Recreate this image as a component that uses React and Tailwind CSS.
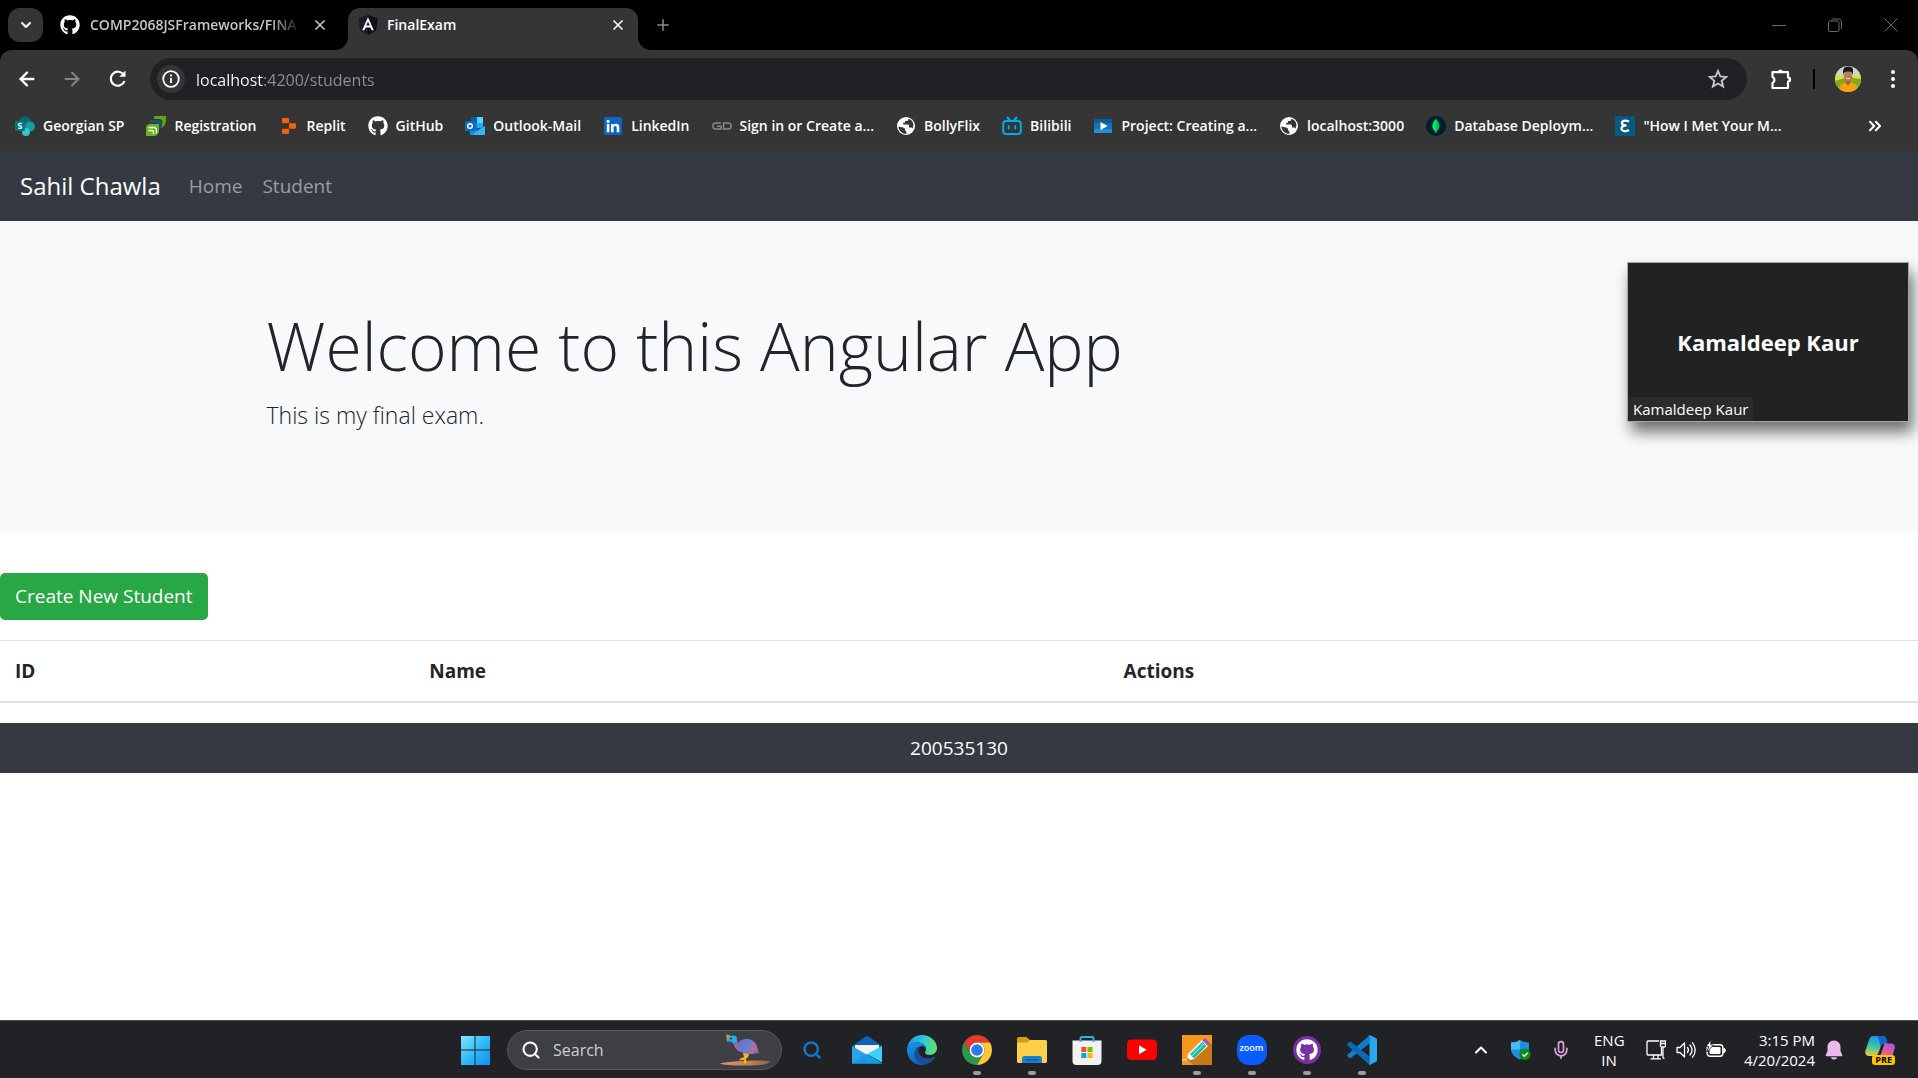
import React from "react";
import { FaGithub } from "react-icons/fa";
import {
  ArrowLeft,
  ArrowRight,
  ChevronDown,
  ChevronUp,
  ChevronsRight,
  Mic,
  Plus,
  Search,
  X,
} from "lucide-react";

/* ---------- small logos ---------- */

const SharePointIcon = () => (
  <svg viewBox="0 0 20 20" className="size-5">
    <circle cx="10" cy="6" r="5.8" fill="#036c70" />
    <circle cx="15" cy="10.5" r="5" fill="#1a9ba1" />
    <circle cx="11" cy="16" r="4" fill="#37c6d0" />
    <rect x="0" y="5" width="10" height="10" rx="1" fill="#03787c" />
    <path d="M7 7.8C5.600 7 3.400 7.200 3.500 8.700c.1 1.300 3.300 1 3.300 2.500 0 1.400-2.200 1.500-3.500.7" fill="none" stroke="#fff" strokeWidth="1.300" />
  </svg>
);

const RegistrationIcon = () => (
  <svg viewBox="0 0 20 20" className="size-5">
    <path d="M8 0h12v3c0 5-2 8-5 9 2-5 2-8-1-9H8z" fill="#5ea510" />
    <path d="M4 4h8c3 0 4 2 3 6-.5 2-1 3-2 4 0-5-1-7-4-7H4z" fill="#1c4f82" />
    <path d="M0 12c0-2.500 2-4 4.500-4H13v6c0 4-3 6-6 6H0z" fill="#6cb41c" />
    <path d="M2.500 11.500h5.500c2 0 2.500 1.500 2.500 3v3M2.500 14.500h3.200c1.300 0 1.800.8 1.800 1.800V18" fill="none" stroke="#fff" strokeWidth="1.300" />
  </svg>
);

const ReplitIcon = () => (
  <svg viewBox="0 0 20 20" className="size-5">
    <path d="M3 3.200C3 2.500 3.500 2 4.200 2H9c.6 0 1 .5 1 1.200V7.300H4.200C3.500 7.300 3 6.800 3 6.200zM10 7.300h5.800c.7 0 1.200.5 1.200 1.200v3c0 .7-.5 1.200-1.200 1.200H10zM3 13.900c0-.7.5-1.200 1.200-1.200H10v4.100c0 .7-.4 1.200-1 1.200H4.200c-.7 0-1.200-.5-1.200-1.200z" fill="#f26207" />
  </svg>
);

const OutlookIcon = () => (
  <svg viewBox="0 0 20 20" className="size-5">
    <rect x="6" y="1" width="12" height="12" rx="1" fill="#0a5fb4" />
    <path d="M12 1h6v6h-6z" fill="#50d9ff" />
    <path d="M6 7h6v5H6z" fill="#0f78d4" />
    <path d="M12 7h6v5h-6z" fill="#28a8ea" />
    <path d="M5 10l7.500 4L20 10v8a1 1 0 0 1-1 1H6a1 1 0 0 1-1-1z" fill="#1490df" />
    <path d="M20 10v8a1 1 0 0 1-1 1H7z" fill="#35b8f1" />
    <rect x="0" y="5" width="10" height="10" rx="1" fill="#0f6cbd" />
    <circle cx="5" cy="10" r="2.300" fill="none" stroke="#fff" strokeWidth="1.400" />
  </svg>
);

const LinkedInIcon = () => (
  <svg viewBox="0 0 20 20" className="size-5">
    <rect x="1" y="1" width="18" height="18" rx="1.500" fill="#0a66c2" />
    <circle cx="5.100" cy="5.300" r="1.600" fill="#fff" />
    <path d="M3.800 8h2.600v8.300H3.800zM8 8h2.500v1.200c.5-.9 1.500-1.400 2.700-1.400 2.500 0 3.100 1.600 3.100 3.900v4.600h-2.600v-4.200c0-1.100-.2-2-1.400-2s-1.700.8-1.700 2v4.200H8z" fill="#fff" />
  </svg>
);

const GdIcon = () => (
  <svg viewBox="0 0 20 20" className="size-5" fill="none" stroke="#85888c" strokeWidth="1.500">
    <path d="M9 7H3.500A2.300 2.300 0 0 0 1 9.300v1.400A2.300 2.300 0 0 0 3.500 13H9v-2.800H5M11.500 7h5A2.300 2.300 0 0 1 19 9.300v1.400a2.300 2.300 0 0 1-2.500 2.300h-5z" />
  </svg>
);

const GlobeIcon = () => (
  <svg viewBox="0 0 20 20" className="size-5">
    <circle cx="10" cy="10" r="9" fill="#fff" />
    <path d="M2.500 10.500 7 11.500c1.500.3 2 1 2 2v1c1.500 0 1.500 1.500 1.500 3.300C6 18 2.500 14.500 2.500 10.500zM12.500 2.800c0 1.700-.6 2.200-2 2.200H9v1.800H7.200v1.700h4.600c1 0 1.200.8 1.200 1.700v1.300h1.700c.8 0 1.400.5 1.600 1.200C18.500 9 17.500 4.500 12.500 2.800z" fill="#35363a" />
  </svg>
);

const BilibiliIcon = () => (
  <svg viewBox="0 0 20 20" className="size-5" fill="none" stroke="#00aeec" strokeWidth="2" strokeLinecap="round">
    <rect x="1.200" y="5" width="17.600" height="13" rx="3" />
    <path d="M5.500 1.500 8 4.500M14.500 1.500 12 4.500M6.700 10v2.500M13.300 10v2.500" />
  </svg>
);

const VideoIcon = () => (
  <svg viewBox="0 0 20 20" className="size-5">
    <rect x="1" y="3" width="18" height="14" fill="#1273b5" />
    <path d="M1 3h18v4H1z" fill="#0d5c96" />
    <path d="M1 13h18v4H1z" fill="#2190d4" />
    <path d="M7.500 6v8l7-4z" fill="#fff" />
  </svg>
);

const MongoIcon = () => (
  <svg viewBox="0 0 20 20" className="size-5">
    <circle cx="10" cy="10" r="10" fill="#001e2b" />
    <path d="M10 3c2.500 2.500 3.500 4.500 3.500 7s-1.300 4-3 5.300V17h-1v-1.700c-1.700-1.300-3-2.800-3-5.300S7.500 5.500 10 3z" fill="#00c658" />
    <path d="M10 3v14h-.5v-1.700c-1.700-1.300-3-2.800-3-5.300S7.500 5.500 10 3z" fill="#00ed64" />
  </svg>
);

const EpsilonIcon = () => (
  <svg viewBox="0 0 20 20" className="size-5">
    <path d="M0 0h20v20H0z" fill="#065a7f" />
    <path d="M14 5.500C10 3.800 6.500 5 7 7.500c.3 1.500 2 2 4.500 2-3.500 0-5.500 1.500-5 3.500.6 2.600 4.500 2.800 7.500 1" fill="none" stroke="#fff" strokeWidth="2.200" />
  </svg>
);

const AngularIcon = () => (
  <svg viewBox="0 0 20 20" className="size-5">
    <path d="M10 0 19.500 3.300 18 15.500 10 20 2 15.500.5 3.300z" fill="#1b1c2c" />
    <path d="M10 0v20l8-4.500L19.500 3.300z" fill="#0e0f18" />
    <path d="M10 2.300 4.200 15.300h2.200l1.200-2.900h4.800l1.200 2.900h2.200zm0 4.100 1.700 4.200H8.300z" fill="#fff" />
  </svg>
);

const ReloadIcon = () => (
  <svg viewBox="0 0 24 24" className="size-6" fill="none" stroke="#fff" strokeWidth="2.200">
    <path d="M17.800 8A7 7 0 1 0 18.500 14" />
    <path d="M19.500 3.500v6.200h-6.200z" fill="#fff" stroke="none" />
  </svg>
);

const InfoIcon = () => (
  <svg viewBox="0 0 20 20" className="size-5" fill="none" stroke="#fff" strokeWidth="1.800">
    <circle cx="10" cy="10" r="7.800" />
    <path d="M10 9v5M10 5.500v1.900" />
  </svg>
);

const StarIcon = () => (
  <svg viewBox="0 0 22 22" className="size-[22px]" fill="none" stroke="#c7c7c7" strokeWidth="1.900" strokeLinejoin="miter">
    <path d="M11 3l2.300 5.400 5.900.5-4.500 3.900 1.400 5.700L11 15.500l-5.100 3 1.400-5.700-4.500-3.900 5.900-.5z" />
  </svg>
);

const PuzzleIcon = () => (
  <svg viewBox="0 0 24 24" className="size-6" fill="none" stroke="#fff" strokeWidth="2.200" strokeLinejoin="round">
    <path d="M3.500 5.200H19v5.300a2 2 0 0 1 0 4.200V21H3.500v-5a3.300 3.300 0 0 0 0-6z" />
    <path d="M9 5a2.500 2.500 0 0 1 5 0zM19.500 10a2.600 2.600 0 0 1 0 5.200z" fill="#fff" stroke="none" />
  </svg>
);

const AvatarIcon = () => (
  <svg viewBox="0 0 26 26" className="size-[26px] rounded-full">
    <path d="M0 0h26v26H0z" fill="#c9d8cf" />
    <path d="M0 10h26v16H0z" fill="#86a81b" />
    <path d="M0 10l7-1 3 3-10 3zM17 10l9-1v4l-8-1z" fill="#d8e03a" />
    <path d="M4 26c0-6 2-8.500 6-9.500h6c5 1 7 3.500 7 9.500z" fill="#f5a30c" />
    <path d="M10.500 13h5v4l-2.500 2.500-2.500-2.500z" fill="#a9603f" />
    <ellipse cx="13" cy="9.500" rx="4" ry="5.800" fill="#bf7c58" />
    <path d="M8.500 9C7.300 3.500 8.500.5 13.500.5S18.700 4 17.500 9c-.4-2.500-1.200-3.500-4.500-3.500S9 6.500 8.500 9z" fill="#1d1a26" />
    <path d="M11 12c1 1.300 3 1.300 4 0z" fill="#fff" />
  </svg>
);

/* ---------- taskbar logos ---------- */

const WindowsIcon = () => (
  <svg viewBox="0 0 30 30" className="size-[30px]">
    <defs>
      <linearGradient id="win" x1="0" y1="0" x2="30" y2="30" gradientUnits="userSpaceOnUse">
        <stop offset="0" stopColor="#8fe4ff" />
        <stop offset=".5" stopColor="#33bdf8" />
        <stop offset="1" stopColor="#0a8ef5" />
      </linearGradient>
    </defs>
    <path d="M1 1h13.500v13.500H1zM15.500 1H30v13.500H15.500zM1 15.500h13.500V30H1zM15.500 15.500H30V30H15.500z" fill="url(#win)" />
  </svg>
);

const BirdIcon = () => (
  <svg viewBox="0 0 52 34" className="h-[34px] w-[52px]">
    <defs>
      <linearGradient id="bird" x1="16" y1="8" x2="42" y2="22" gradientUnits="userSpaceOnUse">
        <stop offset="0" stopColor="#8a5fb8" />
        <stop offset=".4" stopColor="#5d7fd6" />
        <stop offset=".7" stopColor="#b0719b" />
        <stop offset="1" stopColor="#5a55c5" />
      </linearGradient>
      <linearGradient id="sand" x1="0" x2="1">
        <stop offset="0" stopColor="#e2906b" />
        <stop offset=".6" stopColor="#c08350" />
        <stop offset="1" stopColor="#8a5f48" />
      </linearGradient>
    </defs>
    <path d="M1 30.500c4-1.500 20-2.500 27-2.800s20 0 23 .5c1 1-3 2.800-8 3.500-8 1-38 1.500-42-1.200z" fill="url(#sand)" />
    <path d="M24 20h6l-.5 3.500-2.500 2.500.3 4.500h-2.200l-.3-3.500-4.300.3v-1.300l4.500-2z" fill="#f2b61d" />
    <path d="M13 7h5c1 4 2 6 5 8l-2 4c-4-2-6-6-8-12z" fill="#d0569f" />
    <path d="M14.500 6h3c.5 3 1 6 3.500 8l-1.500 1.500c-3-2-4-5-5-9.500z" fill="#3d8bd4" />
    <path d="M17.500 13c1-3.500 4-6.500 8.500-7 5-.5 9 1.500 11 5 1.800 3 1.500 6 3.500 9.500-3-.8-7 .8-11 .5-6-.3-10-3-12-8z" fill="url(#bird)" />
    <path d="M7 1.500l4 .5.500 3-3.500 4z" fill="#c28a55" />
    <path d="M9 6c1-4 8-5 9-1 0 3-2 5-5 5l-4-1z" fill="#27b2dc" />
    <path d="M9 8l-1 2 4 1 2-2z" fill="#235596" />
    <circle cx="12" cy="5.500" r="1" fill="#102a44" />
  </svg>
);

const MailIcon = () => (
  <svg viewBox="0 0 30 30" className="size-[30px]">
    <path d="M0 11 13.500 1.600a2.500 2.500 0 0 1 3 0L30 11v3H0z" fill="#0b62b8" />
    <path d="M3 10h24v10H3z" fill="#f3f3f3" />
    <path d="M0 11l30 17.500H0z" fill="#2aa3ea" />
    <path d="M30 11v16.500L15 19z" fill="#3fd0f8" />
    <path d="M0 28.500h30L15 19z" fill="#159ae6" />
  </svg>
);

const EdgeIcon = () => (
  <svg viewBox="0 0 30 30" className="size-[30px]">
    <defs>
      <linearGradient id="edgeTop" x1="2" y1="6" x2="30" y2="12" gradientUnits="userSpaceOnUse">
        <stop offset="0" stopColor="#1b9de2" />
        <stop offset=".5" stopColor="#34c6d8" />
        <stop offset="1" stopColor="#65e263" />
      </linearGradient>
      <linearGradient id="edgeLow" x1="4" y1="10" x2="14" y2="30" gradientUnits="userSpaceOnUse">
        <stop offset="0" stopColor="#1590df" />
        <stop offset="1" stopColor="#0b62c0" />
      </linearGradient>
    </defs>
    <path d="M0 14.500C.5 6 7 0 15 0s15 6 15 13c0 4-3 7-7 7-3 0-5-1-5-2.500 0-1 1-1 1-3.500C19 10 15 7.500 10 7.500 5 7.500 1 10 0 14.500z" fill="url(#edgeTop)" />
    <path d="M0 14.500C1 10 5 7.500 10 7.500c5 0 9 2.500 9 6.500 0-1.500-2-3-4-3-3 0-6 3-6 7 0 6 5 9 8 11.800C8 31 0 25 0 14.500z" fill="url(#edgeLow)" />
    <path d="M12 11.500C7 14 6 20 9 24.500c2 3.500 5 5 8 5.300 5-.8 9-3.800 11-7.300.5-.8-.2-1-1-.6-6 3-15 1-15.500-5.400-.1-2 .5-3.500 1.500-4.500z" fill="#184f94" />
  </svg>
);

const ChromeIcon = () => (
  <svg viewBox="2 2 44 44" className="size-[30px]">
    <path d="M4.950 13A22 22 0 0 1 43.050 13H24A11 11 0 0 0 14.470 29.500Z" fill="#e33b2e" />
    <path d="M4.950 13A22 22 0 0 0 24 46L33.530 29.500A11 11 0 0 1 14.470 29.500Z" fill="#269c4b" />
    <path d="M43.050 13A22 22 0 0 1 24 46L33.530 29.500A11 11 0 0 0 24 13Z" fill="#fcc934" />
    <circle cx="24" cy="24" r="11" fill="#fff" />
    <circle cx="24" cy="24" r="8.500" fill="#2f78ee" />
  </svg>
);

const ExplorerIcon = () => (
  <svg viewBox="0 0 30 30" className="size-[30px]">
    <path d="M0 4a2 2 0 0 1 2-2h7.500L13 5v5H0z" fill="#dd9c0b" />
    <path d="M0 7.500h10.500L13 5h15.500A1.500 1.500 0 0 1 30 6.500v20a1.500 1.500 0 0 1-1.500 1.500h-27A1.500 1.500 0 0 1 0 26.500z" fill="#fdd04c" />
    <path d="M5 28v-4.500A2.500 2.500 0 0 1 7.500 21h15a2.500 2.500 0 0 1 2.500 2.500V28z" fill="#1a80d2" />
    <path d="M8.500 24.800h13" stroke="#0c5697" strokeWidth="1.200" strokeLinecap="round" />
  </svg>
);

const StoreIcon = () => (
  <svg viewBox="0 0 30 30" className="size-[30px]">
    <path d="M.5 5.500h29V26a4 4 0 0 1-4 4h-21a4 4 0 0 1-4-4z" fill="#f1f1f1" />
    <path d="M8.500 7V3.300A1.300 1.300 0 0 1 9.800 2h10.400a1.300 1.300 0 0 1 1.300 1.300V7" fill="none" stroke="#29b2ec" strokeWidth="2" />
    <path d="M9.300 12h5v5h-5z" fill="#f25022" />
    <path d="M15.500 12h5v5h-5z" fill="#7fba00" />
    <path d="M9.300 18h5v5h-5z" fill="#00a4ef" />
    <path d="M15.500 18h5v5h-5z" fill="#ffb900" />
  </svg>
);

const YouTubeIcon = () => (
  <svg viewBox="0 0 30 30" className="size-[30px]">
    <rect x="0" y="4.500" width="30" height="20.500" rx="4.500" fill="#f00" />
    <path d="M12 10.300v9l7.700-4.500z" fill="#fff" />
  </svg>
);

const PencilIcon = () => (
  <svg viewBox="0 0 30 30" className="size-[30px]">
    <path d="M0 0h30v30H0z" fill="#f7981d" />
    <path d="M27 7l3 3v20H11l-5-5z" fill="#c77a12" />
    <path d="M6 19 20 5l6 6L12 24l-7 2z" fill="#fff" />
    <path d="M7.500 19.500 20.500 6.500l2 2L10 21z" fill="#2cc6d6" />
    <path d="M10 21.500 22.500 9l2 2L12 23.500z" fill="#35b77a" />
    <path d="M20.500 5.500 23 3l5 5-2.500 2.500z" fill="#a453b8" />
    <path d="M5 26l.8-3 2 2z" fill="#333" />
    <path d="M0 24.800h6.500" stroke="#ffe3b8" strokeWidth="1" />
  </svg>
);

const ZoomIcon = () => (
  <span className="flex size-[30px] items-center justify-center rounded-[12px] bg-[#0b5cff] pb-1 text-[9px] leading-3 font-semibold text-white">
    zoom
  </span>
);

const GitHubDesktopIcon = () => (
  <span className="flex size-7 items-center justify-center rounded-full bg-[#7a2fa3] text-white">
    <FaGithub className="size-[22px]" />
  </span>
);

const VsCodeIcon = () => (
  <svg viewBox="0 0 100 100" className="size-[30px]">
    <path d="M75 1v27L13 77q-3 2-5 0l-6-6q-3-3 0-6z" fill="#0f7fcd" />
    <path d="M75 99V72L13 23q-3-2-5 0l-6 6q-3 3 0 6z" fill="#0a6ab5" />
    <path d="M72 2q2-2 5-1l20 10q3 1.500 3 5v68q0 3.500-3 5L77 99q-3 1-5-1l3-4V6z" fill="#29a8f0" />
  </svg>
);

const ShieldIcon = () => (
  <svg viewBox="0 0 20 20" className="size-5">
    <path d="M9 0c2.500 1.700 5.500 2.500 9 2.500V9c0 5-4 8.500-9 10.500C4 17.500 0 14 0 9V2.500C3.500 2.500 6.500 1.700 9 0z" fill="#1b8fe0" />
    <path d="M9 0v9.500H0v-7C3.500 2.500 6.500 1.700 9 0z" fill="#45b9f5" />
    <path d="M9 9.500h9c-.2 5-4 8.200-9 10z" fill="#0f6cc0" />
    <circle cx="14" cy="14.300" r="5.600" fill="#0f8a16" />
    <path d="M11.500 14.500l1.900 1.800 3.300-3.500" stroke="#fff" strokeWidth="1.400" fill="none" />
  </svg>
);

const NetworkIcon = () => (
  <svg viewBox="0 0 20 20" className="size-5" fill="none" stroke="#fff" strokeWidth="1.300">
    <path d="M13 1H2a1 1 0 0 0-1 1v12a1 1 0 0 0 1 1h13.500V8M4.500 18.800H15M7.500 15v3.800M12 15v3.800" />
    <path d="M14.500 1h5v5a1 1 0 0 1-1 1h-3a1 1 0 0 1-1-1zM14.500 3.500h5M17 7v10c0 1 .5 1.500 1.500 1.500" />
  </svg>
);

const VolumeIcon = () => (
  <svg viewBox="0 0 20 20" className="size-5" fill="none" stroke="#fff" strokeWidth="1.300" strokeLinejoin="round" strokeLinecap="round">
    <path d="M1 7.500h3L8.500 3v14L4 12.500H1zM11.500 7.500c1.200 1.500 1.200 3.500 0 5M14 5c2.500 3 2.500 7 0 10M16.500 2.800c3.600 4.200 3.600 10.200 0 14.400" />
  </svg>
);

const BatteryIcon = () => (
  <svg viewBox="0 0 20 20" className="size-5">
    <rect x="1.200" y="4.700" width="15.600" height="11.600" rx="2.800" fill="none" stroke="#fff" strokeWidth="1.400" />
    <rect x="3.500" y="7" width="11" height="7" rx="1.200" fill="#fff" />
    <path d="M17.800 8.300c2 .2 2 4.200 0 4.400z" fill="#fff" stroke="#fff" />
    <path d="M5 0 0 6.500h2.600L1 12l6.500-7H4.700z" fill="#fff" stroke="#202124" strokeWidth=".8" />
  </svg>
);

const BellIcon = () => (
  <svg viewBox="0 0 18 20" className="h-5 w-[18px]" fill="#ecb9ef">
    <path d="M9 .5c4 0 6.500 3 6.500 6.500v4l1.800 4c.3.700 0 1.200-.8 1.200h-15c-.8 0-1.100-.5-.8-1.200l1.800-4V7C2.500 3.500 5 .5 9 .5zM6 17.200h6c-.3 1.500-1.500 2.300-3 2.300s-2.700-.8-3-2.300z" />
  </svg>
);

const CopilotIcon = () => (
  <span className="relative block h-[30px] w-[30px]">
    <svg viewBox="0 0 30 30" className="size-[30px]">
      <defs>
        <linearGradient id="cpA" x1="6" y1="0" x2="4" y2="22" gradientUnits="userSpaceOnUse">
          <stop offset="0" stopColor="#2487f2" />
          <stop offset=".45" stopColor="#31c3b0" />
          <stop offset="1" stopColor="#f5cf2b" />
        </linearGradient>
        <linearGradient id="cpB" x1="28" y1="8" x2="18" y2="26" gradientUnits="userSpaceOnUse">
          <stop offset="0" stopColor="#a457ea" />
          <stop offset=".6" stopColor="#f0588f" />
          <stop offset="1" stopColor="#fb9154" />
        </linearGradient>
      </defs>
      <path d="M8 1h10c2.500 0 3 2 3.700 5l.6 2.500H19c-2.500 0-3 1.500-4 5l-1.500 4c-.8 2-2 3.500-4 3.500H4c-3 0-4.500-2-3.500-5.500L4 5c.8-2.500 2-4 4-4z" fill="url(#cpA)" />
      <path d="M13 1h5c2.500 0 3 2 3.700 5l.6 2.500H19c-2 0-3 1-3.500 3z" fill="#1562d8" />
      <path d="M19.500 8.500H26c3 0 4.500 2 3.600 5.500L26 25c-.8 2.500-2 4-4 4H12l3-7z" fill="url(#cpB)" />
    </svg>
    <span className="absolute right-0 bottom-0 rounded-[3px] bg-[#fdc500] px-[3px] text-[9px] leading-[10px] font-bold text-black">PRE</span>
  </span>
);

/* ---------- page data ---------- */

const bookmarks = [
  { label: "Georgian SP", Icon: SharePointIcon },
  { label: "Registration", Icon: RegistrationIcon },
  { label: "Replit", Icon: ReplitIcon },
  { label: "GitHub", Icon: () => <FaGithub className="size-5 text-white" /> },
  { label: "Outlook-Mail", Icon: OutlookIcon },
  { label: "LinkedIn", Icon: LinkedInIcon },
  { label: "Sign in or Create a...", Icon: GdIcon },
  { label: "BollyFlix", Icon: GlobeIcon },
  { label: "Bilibili", Icon: BilibiliIcon },
  { label: "Project: Creating a...", Icon: VideoIcon },
  { label: "localhost:3000", Icon: GlobeIcon },
  { label: "Database Deploym...", Icon: MongoIcon },
  { label: '"How I Met Your M...', Icon: EpsilonIcon },
];

const apps = [
  { label: "Find", Icon: () => <Search className="size-5 text-[#1673c6]" strokeWidth={3} /> },
  { label: "Mail", Icon: MailIcon },
  { label: "Edge", Icon: EdgeIcon },
  { label: "Chrome", Icon: ChromeIcon, running: true },
  { label: "File Explorer", Icon: ExplorerIcon, running: true },
  { label: "Store", Icon: StoreIcon },
  { label: "YouTube", Icon: YouTubeIcon },
  { label: "Editor", Icon: PencilIcon, running: true },
  { label: "Zoom", Icon: ZoomIcon, running: true },
  { label: "GitHub Desktop", Icon: GitHubDesktopIcon, running: true },
  { label: "VS Code", Icon: VsCodeIcon, running: true },
];

/* ---------- browser chrome ---------- */

function TabStrip() {
  return (
    <div className="flex h-[50px] items-end bg-black pl-2 text-sm font-semibold">
      <button aria-label="Search tabs" className="mb-2 flex h-[34px] w-[35px] items-center justify-center rounded-xl bg-[#353535] text-white">
        <ChevronDown className="size-4" strokeWidth={3} />
      </button>
      <div className="flex h-[42px] w-[292px] items-center pb-2 pl-[17px] text-[#c7c7c7]">
        <FaGithub className="size-5 shrink-0 text-white" />
        <span className="ml-[10px] w-[212px] whitespace-nowrap [mask-image:linear-gradient(to_right,black_85%,transparent)]">
          COMP2068JSFrameworks/FINA
        </span>
        <button aria-label="Close tab" className="ml-[10px]">
          <X className="size-4" strokeWidth={2.5} />
        </button>
      </div>
      <svg viewBox="0 0 13 13" className="size-[13px]">
        <path d="M13 0v13H0A13 13 0 0 0 13 0z" fill="#353535" />
      </svg>
      <div className="flex h-[42px] w-[290px] items-center rounded-t-xl bg-[#353535] pr-3 pb-2 pl-[10px] text-white">
        <AngularIcon />
        <span className="ml-[9px] flex-1">FinalExam</span>
        <button aria-label="Close tab">
          <X className="size-4" strokeWidth={2.5} />
        </button>
      </div>
      <svg viewBox="0 0 13 13" className="size-[13px]">
        <path d="M0 0v13h13A13 13 0 0 1 0 0z" fill="#353535" />
      </svg>
      <button aria-label="New tab" className="mb-4 ml-[3px] text-[#8c8c8c]">
        <Plus className="size-[18px]" strokeWidth={2} />
      </button>
      <div className="mb-[18px] ml-auto flex items-center gap-[42px] pr-5 text-[#6a6a6a]">
        <button aria-label="Minimize">
          <svg viewBox="0 0 14 14" className="size-[14px]" stroke="currentColor">
            <path d="M0 7.500h14" />
          </svg>
        </button>
        <button aria-label="Restore">
          <svg viewBox="0 0 14 14" className="size-[14px]" fill="none" stroke="currentColor">
            <rect x=".5" y="3" width="10.500" height="10.500" rx="1.500" />
            <path d="M3.500 1h7a3 3 0 0 1 3 3v7" />
          </svg>
        </button>
        <button aria-label="Close">
          <svg viewBox="0 0 14 14" className="size-[14px]" stroke="currentColor">
            <path d="M.5.5l13 13M13.500.5l-13 13" />
          </svg>
        </button>
      </div>
    </div>
  );
}

function Toolbar() {
  return (
    <div className="flex h-[58px] items-center rounded-t-xl bg-[#353535] pr-[15px] pl-4 text-white">
      <button aria-label="Back" className="w-6">
        <ArrowLeft className="size-[22px]" strokeWidth={2.5} />
      </button>
      <button aria-label="Forward" className="ml-[21px] w-6 text-[#848484]">
        <ArrowRight className="size-[22px]" strokeWidth={2.2} />
      </button>
      <button aria-label="Reload" className="ml-[21px]">
        <ReloadIcon />
      </button>
      <div className="ml-5 flex h-[42px] flex-1 items-center rounded-full bg-[#202124] pr-[18px] pl-[7px]">
        <button aria-label="Site information" className="flex size-7 items-center justify-center rounded-full bg-[#353535]">
          <InfoIcon />
        </button>
        {/* The host name is brighter than the rest of the address. */}
        <input
          aria-label="Address"
          defaultValue="localhost:4200/students"
          className="ml-[11px] flex-1 bg-[linear-gradient(to_right,#ffffff_68px,#8f9195_68px)] bg-clip-text pt-px text-base text-transparent outline-none"
        />
        <button aria-label="Bookmark this tab">
          <StarIcon />
        </button>
      </div>
      <button aria-label="Extensions" className="ml-[22px]">
        <PuzzleIcon />
      </button>
      <span className="ml-5 h-5 w-[2px] bg-black" />
      <button aria-label="Profile" className="ml-5">
        <AvatarIcon />
      </button>
      <button aria-label="Menu" className="ml-[22px]">
        <svg viewBox="0 0 20 20" className="size-5" fill="#fff">
          <circle cx="10" cy="3" r="2" />
          <circle cx="10" cy="10" r="2" />
          <circle cx="10" cy="17" r="2" />
        </svg>
      </button>
    </div>
  );
}

function BookmarkBar() {
  return (
    <nav className="flex h-[43px] items-center bg-[#353535] pb-2 pl-[15px] text-sm font-semibold whitespace-nowrap text-white">
      <div className="flex flex-1 gap-[22px]">
        {bookmarks.map(({ label, Icon }) => (
          <a key={label} href="#" className="flex items-center gap-2">
            <Icon />
            {label}
          </a>
        ))}
      </div>
      <button aria-label="More bookmarks" className="mr-[33px]">
        <ChevronsRight className="size-5" strokeWidth={2.500} />
      </button>
    </nav>
  );
}

/* ---------- web page ---------- */

function StudentsPage() {
  return (
    <main className="flex-1 bg-white text-[19px] leading-[30px] text-[#212529]">
      <nav className="flex h-[70px] items-center bg-[#353a42] px-5">
        <a href="#" className="mr-7 text-2xl text-white">Sahil Chawla</a>
        <div className="flex gap-5 text-[#9a9da1]">
          <a href="#">Home</a>
          <a href="#">Student</a>
        </div>
      </nav>
      <header className="mb-10 bg-[#f8f9fb] px-10 pt-[82px] pb-20">
        <div className="mx-auto max-w-[1425px] px-5">
          <h1 className="mb-[10px] text-[66px] leading-[84px] font-light">Welcome to this Angular App</h1>
          <p className="mb-5 text-[23px] leading-9 font-light">This is my final exam.</p>
        </div>
      </header>
      <button className="rounded-[5px] bg-[#28a745] px-[15px] py-2 leading-[31px] text-white">Create New Student</button>
      <table className="mt-5 w-full border-collapse text-left">
        <thead>
          <tr className="border-t border-b-2 border-[#dee2e6]">
            <th className="w-[21.6%] px-[15px] py-[15px] font-bold">ID</th>
            <th className="w-[36.2%] px-[15px] py-[15px] font-bold">Name</th>
            <th className="px-[15px] py-[15px] font-bold">Actions</th>
          </tr>
        </thead>
      </table>
      <footer className="mt-5 bg-[#353a42] py-[10px] text-center text-white">200535130</footer>
    </main>
  );
}

function CallTile() {
  return (
    <aside className="absolute top-[262px] right-[9px] flex h-[160px] w-[282px] items-center justify-center border border-[#a5a7a8] bg-[#222] text-white shadow-[4px_10px_14px_rgba(0,0,0,0.55)]">
      <span className="text-[22px] font-bold">Kamaldeep Kaur</span>
      <span className="absolute bottom-0 left-0 bg-[#2b2b2b] px-[5px] text-[15px] leading-6">Kamaldeep Kaur</span>
    </aside>
  );
}

/* ---------- taskbar ---------- */

function Taskbar() {
  return (
    <footer className="flex h-[58px] items-center border-t border-[#4a4b4e] bg-[#212226] text-white">
      <div className="flex flex-1 items-center justify-end">
        <button aria-label="Start" className="mr-[17px]">
          <WindowsIcon />
        </button>
        <label className="flex h-10 w-[275px] items-center rounded-full border border-[#55565a] bg-[#3e3f42] pr-[10px] pl-[13px]">
          <Search className="size-5 shrink-0" strokeWidth={2.500} />
          <input aria-label="Search" placeholder="Search" className="ml-3 w-0 flex-1 bg-transparent text-base outline-none placeholder:text-[#cfcfd1]" />
          <BirdIcon />
        </label>
        <div className="ml-[2px] flex">
          {apps.map(({ label, Icon, running }) => (
            <button key={label} aria-label={label} className="relative flex h-[58px] w-[55px] items-center justify-center">
              <Icon />
              {running && <span className="absolute bottom-1 h-1 w-2 rounded-full bg-[#9d9d9f]" />}
            </button>
          ))}
        </div>
      </div>
      <div className="flex items-center pr-[23px] pl-[82px] text-[15px] leading-5">
        <button aria-label="Show hidden icons"><ChevronUp className="size-5" strokeWidth={2.500} /></button>
        <button aria-label="Security" className="ml-5"><ShieldIcon /></button>
        <button aria-label="Microphone" className="ml-5"><Mic className="size-5 text-[#d9a5dd]" strokeWidth={2} /></button>
        <button className="ml-[23px] w-[30px] text-center">ENG<br />IN</button>
        <div className="ml-[22px] flex gap-[10px]">
          <NetworkIcon />
          <VolumeIcon />
          <BatteryIcon />
        </div>
        <button className="ml-[17px] w-[72px] text-right whitespace-nowrap">3:15 PM<br />4/20/2024</button>
        <button aria-label="Notifications" className="ml-[10px]"><BellIcon /></button>
        <button aria-label="Copilot" className="ml-[22px]"><CopilotIcon /></button>
      </div>
    </footer>
  );
}

export default function App() {
  return (
    <div className="relative flex min-h-screen flex-col bg-black font-['Open_Sans',sans-serif]">
      <TabStrip />
      <Toolbar />
      <BookmarkBar />
      <StudentsPage />
      <Taskbar />
      <CallTile />
    </div>
  );
}
